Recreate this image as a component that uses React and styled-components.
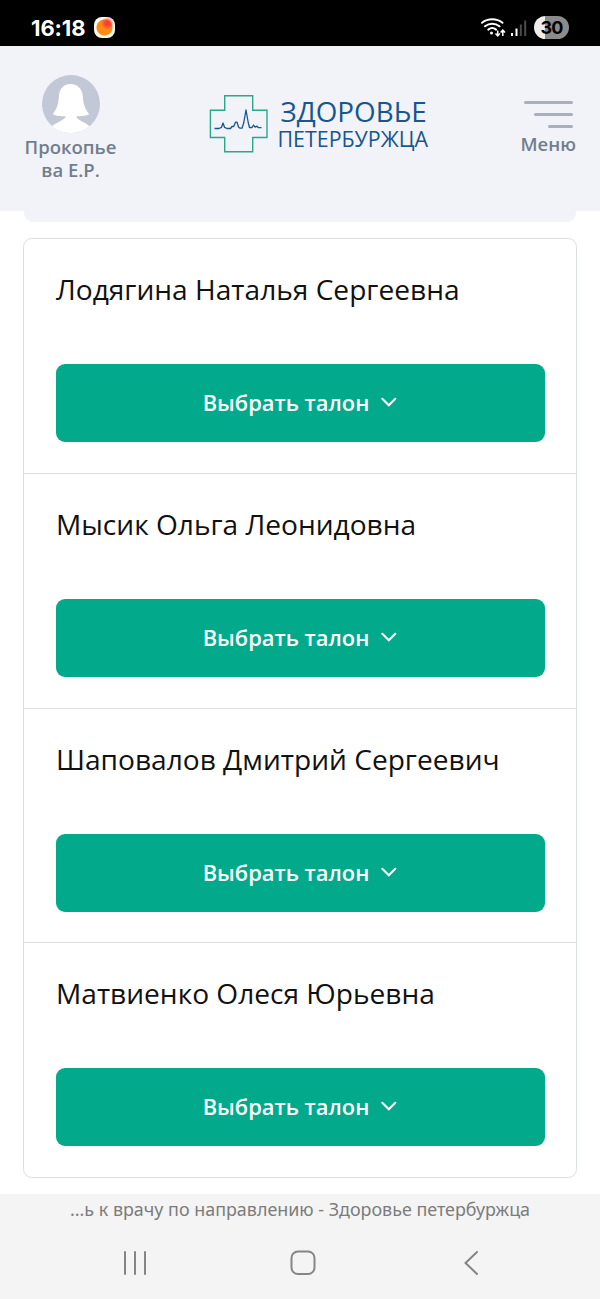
import React from "react";
import styled, { createGlobalStyle } from "styled-components";

const doctors = [
  "Лодягина Наталья Сергеевна",
  "Мысик Ольга Леонидовна",
  "Шаповалов Дмитрий Сергеевич",
  "Матвиенко Олеся Юрьевна",
];

function StatusIcons() {
  return (
    <svg width="50" height="22" viewBox="480 17 50 22" fill="none">
      <g stroke="#fff" strokeWidth="2" strokeLinecap="round">
        <path d="M482 22.8c6-4.6 14.500-4.600 20.500 0" />
        <path d="M485 26.300c4.300-3.400 10.200-3.400 14.500 0" />
        <path d="M488.300 29.600c2.400-1.900 5.400-1.900 7.800 0" />
      </g>
      <circle cx="491.500" cy="33" r="1.500" fill="#fff" />
      <g stroke="#fff" strokeWidth="1.500">
        <path d="M497.700 30.500v5M495.500 33.500l2.200 2.300 2.200-2.300" />
        <path d="M502.800 36v-5.500M500.600 32.500l2.200-2.300 2.200 2.300" />
      </g>
      <path d="M511 33h2v3h-2zM515.500 28.500h2V36h-2z" fill="#fff" />
      <path d="M519.800 24.500h2V36h-2zM524.200 20.500h2V36h-2z" fill="#4c4c4c" />
    </svg>
  );
}

function Avatar() {
  return (
    <svg width="58" height="58" viewBox="0 0 58 58">
      <circle cx="29" cy="29" r="29" fill="#c2c8d5" />
      <path
        d="M28.500 9c-6.500 0-11 4.600-11.500 11.500-.4 8-2 13-6.200 18.700 0 0 3 2 12.700 2.100v1.200c-4 4-9.500 5-13.500 8.700A29 29 0 0 0 29 58a29 29 0 0 0 18.500-6.800c-4-3.700-9.500-4.800-13-8.700v-1.200c9.500-.1 12.700-2.100 12.700-2.100-4.500-5.700-6-10.700-6.500-18.700C40.200 13.600 35 9 28.500 9z"
        fill="#fff"
      />
    </svg>
  );
}

function LogoCross() {
  return (
    <svg width="60" height="60" viewBox="209 94 60 60" fill="none">
      <path
        d="M224.700 95.700h28v14.600h14.300v27.200h-14.300v14.200h-28v-14.200h-14.300v-27.200h14.300z"
        stroke="#2aa88a"
        strokeWidth="1.400"
      />
      <path
        d="M214.500 128.500h4.500l2.500-1.200 1.500-4.300 1.500 4.300 2.500 1.200h3.500l1.500-2h1.700l1.800-4.300h1.500l1.500 4.800 1.500 1.200h2l1.700-5.200 2.300-13 2.300 13 1.200 4.500h2.500l1.500-2.500 1.500 2.200 2-1 1.500 1.500h3"
        stroke="#17568f"
        strokeWidth="1.300"
        strokeLinejoin="round"
      />
    </svg>
  );
}

function App() {
  return (
    <Page>
      <GlobalStyle />
      <StatusBar>
        <Clock>16:18</Clock>
        <AppBadge />
        <StatusRight>
          <StatusIcons />
          <Battery>30</Battery>
        </StatusRight>
      </StatusBar>
      <Header>
        <Profile>
          <Avatar />
          <ProfileName>
            Прокопье
            <br />
            ва Е.Р.
          </ProfileName>
        </Profile>
        <Logo>
          <LogoCross />
          <LogoText>
            <LogoTop>ЗДОРОВЬЕ</LogoTop>
            <LogoBottom>ПЕТЕРБУРЖЦА</LogoBottom>
          </LogoText>
        </Logo>
        <Menu>
          <MenuLine $width={49} />
          <MenuLine $width={39} />
          <MenuLine $width={25} />
          <MenuLabel>Меню</MenuLabel>
        </Menu>
      </Header>
      <PanelEdge />
      <DoctorList>
        {doctors.map((name) => (
          <DoctorRow key={name}>
            <DoctorName>{name}</DoctorName>
            <TicketButton>
              Выбрать талон
              <svg width="17" height="13" viewBox="0 0 17 13" fill="none">
                <path d="M2.300 2.800l6.500 6.400 6.500-6.400" stroke="#fff" strokeWidth="2.100" strokeLinecap="round" />
              </svg>
            </TicketButton>
          </DoctorRow>
        ))}
      </DoctorList>
      <BottomBar>
        <PageTitle>...ь к врачу по направлению - Здоровье петербуржца</PageTitle>
        <NavRow>
          <svg width="24" height="26" viewBox="0 0 24 26">
            <path d="M2 2v22M12 2v22M22 2v22" stroke="#858585" strokeWidth="2" strokeLinecap="round" />
          </svg>
          <svg width="26" height="26" viewBox="0 0 26 26">
            <rect x="1.500" y="1.500" width="23" height="22.500" rx="6.500" fill="none" stroke="#858585" strokeWidth="2" />
          </svg>
          <svg width="16" height="26" viewBox="0 0 16 26">
            <path d="M14 2L2.500 13 14 24" fill="none" stroke="#858585" strokeWidth="2" strokeLinecap="round" />
          </svg>
        </NavRow>
      </BottomBar>
    </Page>
  );
}

export default App;

const GlobalStyle = createGlobalStyle`
  * {
    box-sizing: border-box;
  }
  body {
    margin: 0;
    background: #fff;
  }
  svg {
    display: block;
    flex-shrink: 0;
  }
`;

const Page = styled.div`
  width: 600px;
  height: 1299px;
  display: flex;
  flex-direction: column;
  overflow: hidden;
  background: #fff;
  font-family: "Open Sans", "Noto Sans", sans-serif;
`;

const StatusBar = styled.div`
  height: 46px;
  flex-shrink: 0;
  display: flex;
  align-items: center;
  padding: 9px 31px 0;
  background: #000;
  color: #fff;
`;

const Clock = styled.span`
  width: 54px;
  font-family: Inter, sans-serif;
  font-size: 22px;
  font-weight: 700;
  line-height: 24px;
  letter-spacing: -0.1px;
`;

const AppBadge = styled.span`
  width: 21px;
  height: 21px;
  margin-left: 9px;
  border-radius: 8px;
  background: radial-gradient(circle at 64% 30%, #ff3a35 0 10%, rgba(255, 58, 53, 0) 32%),
    radial-gradient(circle at 50% 50%, #ff8a14 0 7.5px, #fffaf0 8.5px);
`;

const StatusRight = styled.div`
  margin-left: auto;
  display: flex;
  align-items: center;
  gap: 4px;
`;

const Battery = styled.span`
  width: 35px;
  height: 23px;
  border-radius: 12px;
  background: linear-gradient(90deg, #eee 0 30%, #8b8b8b 30%);
  color: #000;
  font-family: Inter, sans-serif;
  font-size: 18px;
  font-weight: 700;
  line-height: 23px;
  letter-spacing: -0.8px;
  text-align: center;
`;

const Header = styled.header`
  height: 165px;
  flex-shrink: 0;
  display: flex;
  align-items: flex-start;
  justify-content: space-between;
  padding: 0 24px;
  background: #f1f3f8;
`;

const Profile = styled.div`
  width: 93px;
  display: flex;
  flex-direction: column;
  align-items: center;
  padding-top: 29px;
`;

const ProfileName = styled.div`
  margin-top: 2px;
  color: #727d8d;
  font-size: 18.500px;
  font-weight: 600;
  line-height: 23px;
  text-align: center;
  white-space: nowrap;
`;

const Logo = styled.div`
  display: flex;
  gap: 9px;
  padding-top: 48px;
  color: #17568f;
`;

const LogoText = styled.div`
  width: 151px;
  white-space: nowrap;
`;

const LogoTop = styled.div`
  padding-left: 3px;
  font-size: 27.800px;
  line-height: 34px;
`;

const LogoBottom = styled.div`
  font-size: 21.400px;
  line-height: 22px;
`;

const Menu = styled.div`
  width: 56px;
  display: flex;
  flex-direction: column;
  align-items: flex-end;
  gap: 9px;
  padding-top: 55px;
`;

const MenuLine = styled.span`
  width: ${(props) => props.$width}px;
  height: 3px;
  margin-right: 3px;
  border-radius: 2px;
  background: #a9b0bb;
`;

const MenuLabel = styled.span`
  margin-top: -5px;
  color: #727d8d;
  font-size: 18.500px;
  font-weight: 600;
  line-height: 24px;
`;

const PanelEdge = styled.div`
  height: 11px;
  flex-shrink: 0;
  margin: 0 24px;
  border-radius: 0 0 9px 9px;
  background: #f1f3f8;
`;

const DoctorList = styled.main`
  height: 940px;
  flex-shrink: 0;
  display: grid;
  grid-template-rows: 235px 235px 234px 234px;
  margin: 16px 23px 0;
  border: 1px solid #dedfe0;
  border-radius: 9px;
`;

const DoctorRow = styled.section`
  display: flex;
  flex-direction: column;
  padding: 30px 31.500px 0;
  &:not(:last-child) {
    border-bottom: 1px solid #dedfe0;
  }
`;

const DoctorName = styled.div`
  height: 95px;
  padding-left: 0.5px;
  color: #111;
  font-size: 28.100px;
  line-height: 40px;
  white-space: nowrap;
`;

const TicketButton = styled.button`
  height: 77.500px;
  display: flex;
  align-items: center;
  justify-content: center;
  gap: 11px;
  padding: 0;
  border: 0;
  border-radius: 9px;
  background: #02a98b;
  color: #fff;
  font-family: inherit;
  font-size: 21.900px;
  font-weight: 600;
`;

const BottomBar = styled.footer`
  height: 105px;
  flex-shrink: 0;
  margin-top: 16px;
  background: #f4f4f4;
`;

const PageTitle = styled.div`
  height: 56px;
  padding-top: 2px;
  color: #7c7c7c;
  font-family: "Noto Sans", sans-serif;
  font-size: 17.900px;
  line-height: 26px;
  text-align: center;
  white-space: nowrap;
`;

const NavRow = styled.nav`
  display: grid;
  grid-template-columns: 167px 173px 16px;
  padding-left: 123px;
`;
